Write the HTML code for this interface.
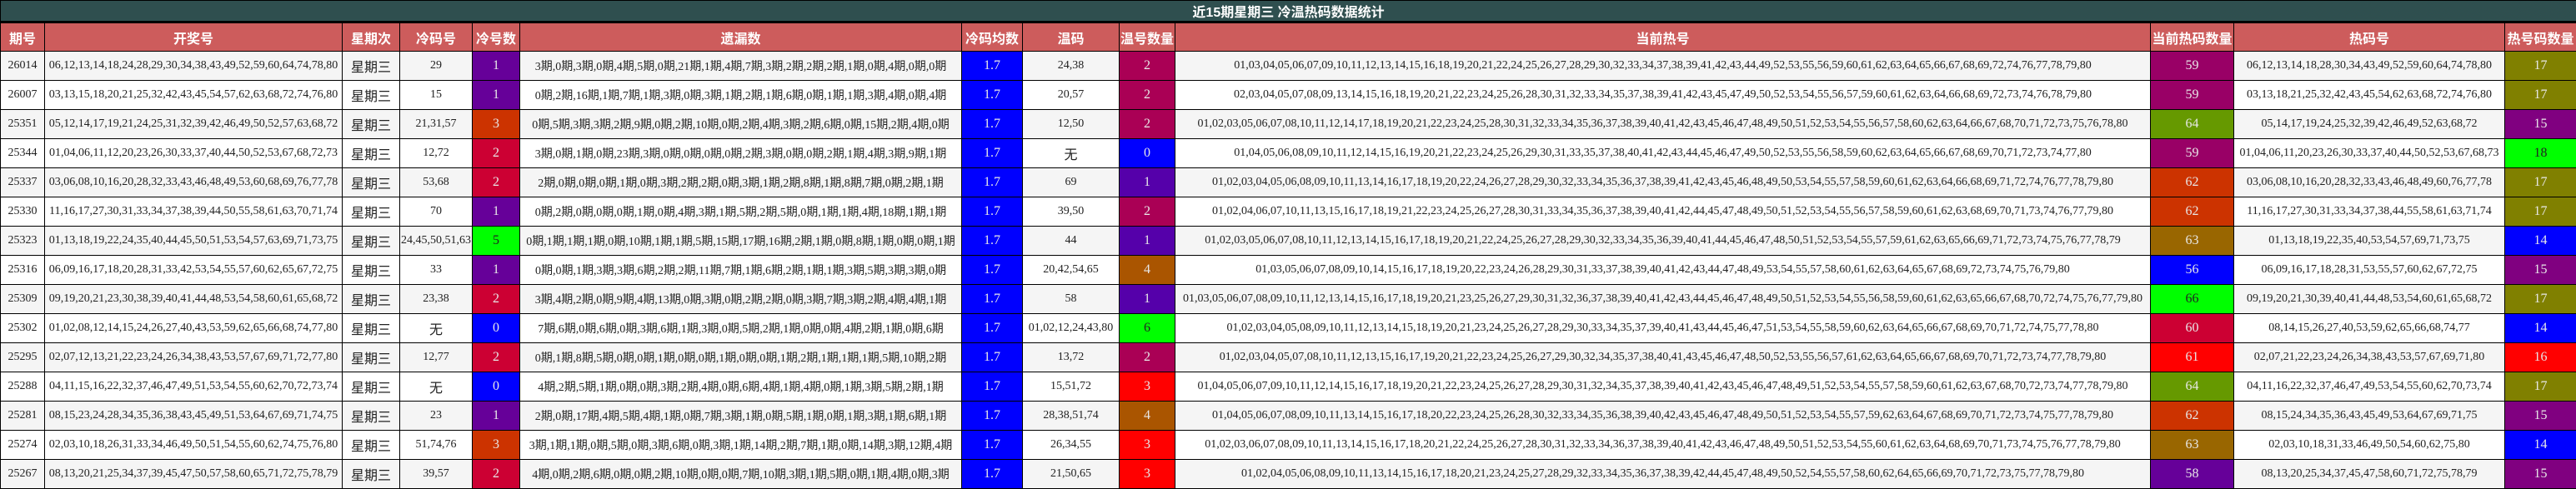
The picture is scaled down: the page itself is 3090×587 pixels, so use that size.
<!DOCTYPE html>
<html><head><meta charset="utf-8">
<style>
*{margin:0;padding:0;box-sizing:border-box}
body{width:3090px;height:587px;overflow:hidden;background:#fff;font-family:"Liberation Serif","Noto Sans CJK SC",serif;}
table{border-collapse:collapse;table-layout:fixed;width:3090px}
td,th{border:1px solid #000;text-align:center;vertical-align:middle;font-size:14px;color:#222;white-space:nowrap;overflow:hidden;padding:0}
.t td{height:26px;background:#2f4f4f;color:#fff;font-weight:bold;font-size:16px;font-family:"Liberation Sans","Noto Sans CJK SC",sans-serif;border-bottom:3px solid #000}
.h th{height:35px;background:#cd5c5c;color:#fff;font-weight:bold;font-size:16px;font-family:"Liberation Sans","Noto Sans CJK SC",sans-serif}
tbody tr{height:35px}
tbody tr:nth-child(odd){background:#f5f5f5}
tbody tr:nth-child(even){background:#fff}
.w{font-family:"Liberation Sans","Noto Sans CJK SC",sans-serif;font-size:16px}
.c{color:#e8e8e8;font-size:16px}
.pu{background:#660099}.cr{background:#cc0033}.or{background:#cc3300}.bl{background:#0000ff}.li{background:#00ff00;color:#222}
.mg{background:#aa0055}.vi{background:#5500aa}.br{background:#aa5500}.rd{background:#ff0000}
.h59{background:#990066}.og{background:#669900}.gd{background:#996600}.ol{background:#808000}.pp{background:#800080}
</style></head><body>
<table>
<colgroup><col style="width:53px"><col style="width:357px"><col style="width:69px"><col style="width:87px"><col style="width:57px"><col style="width:530px"><col style="width:73px"><col style="width:116px"><col style="width:67px"><col style="width:1170px"><col style="width:100px"><col style="width:325px"><col style="width:86px"></colgroup>
<thead>
<tr class="t"><td colspan="13">近15期星期三 冷温热码数据统计</td></tr>
<tr class="h"><th>期号</th><th>开奖号</th><th>星期次</th><th>冷码号</th><th>冷号数</th><th>遗漏数</th><th>冷码均数</th><th>温码</th><th>温号数量</th><th>当前热号</th><th>当前热码数量</th><th>热码号</th><th>热号码数量</th></tr>
</thead>
<tbody>
<tr><td>26014</td><td>06,12,13,14,18,24,28,29,30,34,38,43,49,52,59,60,64,74,78,80</td><td class="w">星期三</td><td>29</td><td class="c pu">1</td><td>3期,0期,3期,0期,4期,5期,0期,21期,1期,4期,7期,3期,2期,2期,2期,1期,0期,4期,0期,0期</td><td class="c bl">1.7</td><td>24,38</td><td class="c mg">2</td><td>01,03,04,05,06,07,09,10,11,12,13,14,15,16,18,19,20,21,22,24,25,26,27,28,29,30,32,33,34,37,38,39,41,42,43,44,49,52,53,55,56,59,60,61,62,63,64,65,66,67,68,69,72,74,76,77,78,79,80</td><td class="c h59">59</td><td>06,12,13,14,18,28,30,34,43,49,52,59,60,64,74,78,80</td><td class="c ol">17</td></tr>
<tr><td>26007</td><td>03,13,15,18,20,21,25,32,42,43,45,54,57,62,63,68,72,74,76,80</td><td class="w">星期三</td><td>15</td><td class="c pu">1</td><td>0期,2期,16期,1期,7期,1期,3期,0期,3期,1期,2期,1期,6期,0期,1期,1期,3期,4期,0期,4期</td><td class="c bl">1.7</td><td>20,57</td><td class="c mg">2</td><td>02,03,04,05,07,08,09,13,14,15,16,18,19,20,21,22,23,24,25,26,28,30,31,32,33,34,35,37,38,39,41,42,43,45,47,49,50,52,53,54,55,56,57,59,60,61,62,63,64,66,68,69,72,73,74,76,78,79,80</td><td class="c h59">59</td><td>03,13,18,21,25,32,42,43,45,54,62,63,68,72,74,76,80</td><td class="c ol">17</td></tr>
<tr><td>25351</td><td>05,12,14,17,19,21,24,25,31,32,39,42,46,49,50,52,57,63,68,72</td><td class="w">星期三</td><td>21,31,57</td><td class="c or">3</td><td>0期,5期,3期,3期,2期,9期,0期,2期,10期,0期,2期,4期,3期,2期,6期,0期,15期,2期,4期,0期</td><td class="c bl">1.7</td><td>12,50</td><td class="c mg">2</td><td>01,02,03,05,06,07,08,10,11,12,14,17,18,19,20,21,22,23,24,25,28,30,31,32,33,34,35,36,37,38,39,40,41,42,43,45,46,47,48,49,50,51,52,53,54,55,56,57,58,60,62,63,64,66,67,68,70,71,72,73,75,76,78,80</td><td class="c og">64</td><td>05,14,17,19,24,25,32,39,42,46,49,52,63,68,72</td><td class="c pp">15</td></tr>
<tr><td>25344</td><td>01,04,06,11,12,20,23,26,30,33,37,40,44,50,52,53,67,68,72,73</td><td class="w">星期三</td><td>12,72</td><td class="c cr">2</td><td>3期,0期,1期,0期,23期,3期,0期,0期,0期,0期,2期,3期,0期,0期,2期,1期,4期,3期,9期,1期</td><td class="c bl">1.7</td><td class="w">无</td><td class="c bl">0</td><td>01,04,05,06,08,09,10,11,12,14,15,16,19,20,21,22,23,24,25,26,29,30,31,33,35,37,38,40,41,42,43,44,45,46,47,49,50,52,53,55,56,58,59,60,62,63,64,65,66,67,68,69,70,71,72,73,74,77,80</td><td class="c h59">59</td><td>01,04,06,11,20,23,26,30,33,37,40,44,50,52,53,67,68,73</td><td class="c li">18</td></tr>
<tr><td>25337</td><td>03,06,08,10,16,20,28,32,33,43,46,48,49,53,60,68,69,76,77,78</td><td class="w">星期三</td><td>53,68</td><td class="c cr">2</td><td>2期,0期,0期,0期,1期,0期,3期,2期,2期,0期,3期,1期,2期,8期,1期,8期,7期,0期,2期,1期</td><td class="c bl">1.7</td><td>69</td><td class="c vi">1</td><td>01,02,03,04,05,06,08,09,10,11,13,14,16,17,18,19,20,22,24,26,27,28,29,30,32,33,34,35,36,37,38,39,41,42,43,45,46,48,49,50,53,54,55,57,58,59,60,61,62,63,64,66,68,69,71,72,74,76,77,78,79,80</td><td class="c or">62</td><td>03,06,08,10,16,20,28,32,33,43,46,48,49,60,76,77,78</td><td class="c ol">17</td></tr>
<tr><td>25330</td><td>11,16,17,27,30,31,33,34,37,38,39,44,50,55,58,61,63,70,71,74</td><td class="w">星期三</td><td>70</td><td class="c pu">1</td><td>0期,2期,0期,0期,0期,1期,0期,4期,3期,1期,5期,2期,5期,0期,1期,1期,4期,18期,1期,1期</td><td class="c bl">1.7</td><td>39,50</td><td class="c mg">2</td><td>01,02,04,06,07,10,11,13,15,16,17,18,19,21,22,23,24,25,26,27,28,30,31,33,34,35,36,37,38,39,40,41,42,44,45,47,48,49,50,51,52,53,54,55,56,57,58,59,60,61,62,63,68,69,70,71,73,74,76,77,79,80</td><td class="c or">62</td><td>11,16,17,27,30,31,33,34,37,38,44,55,58,61,63,71,74</td><td class="c ol">17</td></tr>
<tr><td>25323</td><td>01,13,18,19,22,24,35,40,44,45,50,51,53,54,57,63,69,71,73,75</td><td class="w">星期三</td><td>24,45,50,51,63</td><td class="c li">5</td><td>0期,1期,1期,1期,0期,10期,1期,1期,5期,15期,17期,16期,2期,1期,0期,8期,1期,0期,0期,1期</td><td class="c bl">1.7</td><td>44</td><td class="c vi">1</td><td>01,02,03,05,06,07,08,10,11,12,13,14,15,16,17,18,19,20,21,22,24,25,26,27,28,29,30,32,33,34,35,36,39,40,41,44,45,46,47,48,50,51,52,53,54,55,57,59,61,62,63,65,66,69,71,72,73,74,75,76,77,78,79</td><td class="c gd">63</td><td>01,13,18,19,22,35,40,53,54,57,69,71,73,75</td><td class="c bl">14</td></tr>
<tr><td>25316</td><td>06,09,16,17,18,20,28,31,33,42,53,54,55,57,60,62,65,67,72,75</td><td class="w">星期三</td><td>33</td><td class="c pu">1</td><td>0期,0期,1期,3期,3期,6期,2期,2期,11期,7期,1期,6期,2期,1期,1期,3期,5期,3期,3期,0期</td><td class="c bl">1.7</td><td>20,42,54,65</td><td class="c br">4</td><td>01,03,05,06,07,08,09,10,14,15,16,17,18,19,20,22,23,24,26,28,29,30,31,33,37,38,39,40,41,42,43,44,47,48,49,53,54,55,57,58,60,61,62,63,64,65,67,68,69,72,73,74,75,76,79,80</td><td class="c bl">56</td><td>06,09,16,17,18,28,31,53,55,57,60,62,67,72,75</td><td class="c pp">15</td></tr>
<tr><td>25309</td><td>09,19,20,21,23,30,38,39,40,41,44,48,53,54,58,60,61,65,68,72</td><td class="w">星期三</td><td>23,38</td><td class="c cr">2</td><td>3期,4期,2期,0期,9期,4期,13期,0期,3期,0期,2期,2期,0期,3期,7期,3期,2期,4期,4期,1期</td><td class="c bl">1.7</td><td>58</td><td class="c vi">1</td><td>01,03,05,06,07,08,09,10,11,12,13,14,15,16,17,18,19,20,21,23,25,26,27,29,30,31,32,36,37,38,39,40,41,42,43,44,45,46,47,48,49,50,51,52,53,54,55,56,58,59,60,61,62,63,65,66,67,68,70,72,74,75,76,77,79,80</td><td class="c li">66</td><td>09,19,20,21,30,39,40,41,44,48,53,54,60,61,65,68,72</td><td class="c ol">17</td></tr>
<tr><td>25302</td><td>01,02,08,12,14,15,24,26,27,40,43,53,59,62,65,66,68,74,77,80</td><td class="w">星期三</td><td class="w">无</td><td class="c bl">0</td><td>7期,6期,0期,6期,0期,3期,6期,1期,3期,0期,5期,2期,1期,0期,0期,4期,2期,1期,0期,6期</td><td class="c bl">1.7</td><td>01,02,12,24,43,80</td><td class="c li">6</td><td>01,02,03,04,05,08,09,10,11,12,13,14,15,18,19,20,21,23,24,25,26,27,28,29,30,33,34,35,37,39,40,41,43,44,45,46,47,51,53,54,55,58,59,60,62,63,64,65,66,67,68,69,70,71,72,74,75,77,78,80</td><td class="c cr">60</td><td>08,14,15,26,27,40,53,59,62,65,66,68,74,77</td><td class="c bl">14</td></tr>
<tr><td>25295</td><td>02,07,12,13,21,22,23,24,26,34,38,43,53,57,67,69,71,72,77,80</td><td class="w">星期三</td><td>12,77</td><td class="c cr">2</td><td>0期,1期,8期,5期,0期,0期,1期,0期,0期,1期,0期,0期,1期,2期,1期,1期,1期,5期,10期,2期</td><td class="c bl">1.7</td><td>13,72</td><td class="c mg">2</td><td>01,02,03,04,05,07,08,10,11,12,13,15,16,17,19,20,21,22,23,24,25,26,27,29,30,32,34,35,37,38,40,41,43,45,46,47,48,50,52,53,55,56,57,61,62,63,64,65,66,67,68,69,70,71,72,73,74,77,78,79,80</td><td class="c rd">61</td><td>02,07,21,22,23,24,26,34,38,43,53,57,67,69,71,80</td><td class="c rd">16</td></tr>
<tr><td>25288</td><td>04,11,15,16,22,32,37,46,47,49,51,53,54,55,60,62,70,72,73,74</td><td class="w">星期三</td><td class="w">无</td><td class="c bl">0</td><td>4期,2期,5期,1期,0期,0期,3期,2期,4期,0期,6期,4期,1期,4期,0期,1期,3期,5期,2期,1期</td><td class="c bl">1.7</td><td>15,51,72</td><td class="c rd">3</td><td>01,04,05,06,07,09,10,11,12,14,15,16,17,18,19,20,21,22,23,24,25,26,27,28,29,30,31,32,34,35,37,38,39,40,41,42,43,45,46,47,48,49,51,52,53,54,55,57,58,59,60,61,62,63,67,68,70,72,73,74,77,78,79,80</td><td class="c og">64</td><td>04,11,16,22,32,37,46,47,49,53,54,55,60,62,70,73,74</td><td class="c ol">17</td></tr>
<tr><td>25281</td><td>08,15,23,24,28,34,35,36,38,43,45,49,51,53,64,67,69,71,74,75</td><td class="w">星期三</td><td>23</td><td class="c pu">1</td><td>2期,0期,17期,4期,5期,4期,1期,0期,7期,3期,1期,0期,5期,1期,0期,1期,3期,1期,6期,1期</td><td class="c bl">1.7</td><td>28,38,51,74</td><td class="c br">4</td><td>01,04,05,06,07,08,09,10,11,13,14,15,16,17,18,20,22,23,24,25,26,28,30,32,33,34,35,36,38,39,40,42,43,45,46,47,48,49,50,51,52,53,54,55,57,59,62,63,64,67,68,69,70,71,72,73,74,75,77,78,79,80</td><td class="c or">62</td><td>08,15,24,34,35,36,43,45,49,53,64,67,69,71,75</td><td class="c pp">15</td></tr>
<tr><td>25274</td><td>02,03,10,18,26,31,33,34,46,49,50,51,54,55,60,62,74,75,76,80</td><td class="w">星期三</td><td>51,74,76</td><td class="c or">3</td><td>3期,1期,1期,0期,5期,0期,3期,6期,0期,3期,1期,14期,2期,7期,1期,0期,14期,3期,12期,4期</td><td class="c bl">1.7</td><td>26,34,55</td><td class="c rd">3</td><td>01,02,03,06,07,08,09,10,11,13,14,15,16,17,18,20,21,22,24,25,26,27,28,30,31,32,33,34,36,37,38,39,40,41,42,43,46,47,48,49,50,51,52,53,54,55,60,61,62,63,64,68,69,70,71,73,74,75,76,77,78,79,80</td><td class="c gd">63</td><td>02,03,10,18,31,33,46,49,50,54,60,62,75,80</td><td class="c bl">14</td></tr>
<tr><td>25267</td><td>08,13,20,21,25,34,37,39,45,47,50,57,58,60,65,71,72,75,78,79</td><td class="w">星期三</td><td>39,57</td><td class="c cr">2</td><td>4期,0期,2期,6期,0期,0期,2期,10期,0期,0期,7期,10期,3期,1期,5期,0期,1期,4期,0期,3期</td><td class="c bl">1.7</td><td>21,50,65</td><td class="c rd">3</td><td>01,02,04,05,06,08,09,10,11,13,14,15,16,17,18,20,21,23,24,25,27,28,29,32,33,34,35,36,37,38,39,42,44,45,47,48,49,50,52,54,55,57,58,60,62,64,65,66,69,70,71,72,73,75,77,78,79,80</td><td class="c pu">58</td><td>08,13,20,25,34,37,45,47,58,60,71,72,75,78,79</td><td class="c pp">15</td></tr>
</tbody>
</table>
</body></html>
